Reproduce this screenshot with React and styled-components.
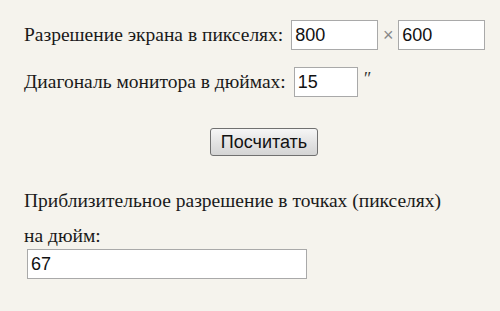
import styled, { createGlobalStyle } from "styled-components";

const Global = createGlobalStyle`
    html, body {
        margin: 0;
        padding: 0;
        background: #f5f3ed;
    }
`;

export default function App(){
    return(
        <Page>
            <Global />
            <Row $top={20}>
                <Label>Разрешение экрана в пикселях:</Label>
                <Field $width={87} defaultValue="800" />
                <Times>×</Times>
                <Field $width={87} defaultValue="600" />
            </Row>
            <Row $top={17}>
                <Label>Диагональ монитора в дюймах:</Label>
                <Field $width={64} defaultValue="15" />
                <Inch>″</Inch>
            </Row>
            <Center>
                <Button>Посчитать</Button>
            </Center>
            <Result>
                <p>Приблизительное разрешение в точках (пикселях)</p>
                <p>на дюйм:</p>
            </Result>
            <Output>
                <Field $width={280} defaultValue="67" readOnly />
            </Output>
        </Page>
    );
}

/* ------------------- Estilização ------------------- */
const Page = styled.div`
    width: 500px;
    height: 311px;
    box-sizing: border-box;
    padding-left: 24px;
    font-family: "Liberation Serif", "DejaVu Serif", serif;
    color: #1a1a1a;
    overflow: hidden;
`;

const Row = styled.div`
    display: flex;
    align-items: center;
    padding-top: ${p => p.$top}px;
`;

const Label = styled.span`
    font-size: 19.5px;
    margin-right: 8px;
`;

const Field = styled.input`
    width: ${p => p.$width}px;
    height: 30px;
    box-sizing: border-box;
    border: 1px solid #a9a9a9;
    background: #fff;
    padding: 0 3px;
    font-family: "Liberation Sans", Arial, sans-serif;
    font-size: 18px;
    color: #111;
    outline: none;
`;

const Times = styled.span`
    font-family: "Liberation Sans", Arial, sans-serif;
    font-size: 18px;
    color: #888;
    width: 20px;
    text-align: center;
`;

const Inch = styled.span`
    font-family: "Liberation Serif", serif;
    font-style: italic;
    font-size: 18px;
    color: #333;
    margin-left: 5px;
    position: relative;
    top: -3px;
`;

const Center = styled.div`
    display: flex;
    justify-content: center;
    padding-top: 31px;
    padding-left: 4px;
`;

const Button = styled.button`
    width: 108px;
    height: 28px;
    border: 1px solid #707070;
    border-radius: 3px;
    background: linear-gradient(#f6f6f6, #e4e4e4 50%, #d4d4d4);
    font-family: "Liberation Sans", Arial, sans-serif;
    font-size: 18px;
    color: #111;
    padding: 0;
`;

const Result = styled.div`
    padding-top: 32px;
    font-size: 19.5px;
    p {
        margin: 0 0 9px;
        line-height: 26px;
    }
    p:last-child {
        margin-bottom: 0;
    }
`;

const Output = styled.div`
    padding-left: 3px;
`;
